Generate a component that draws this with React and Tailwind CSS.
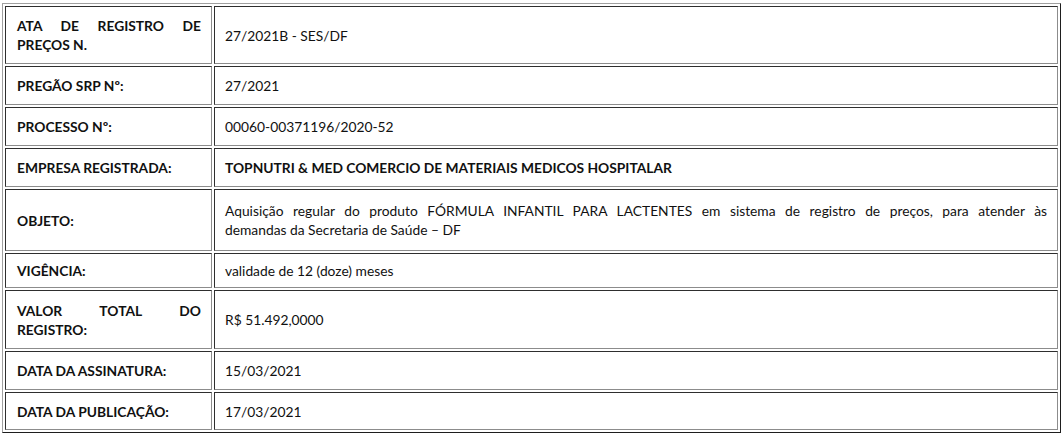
import React from 'react';

// rows of the ata table: label lines, value lines, bold value
const rows = [
  { label: ['ATA DE REGISTRO DE', 'PREÇOS N.'], value: ['27/2021B - SES/DF'] },
  { label: ['PREGÃO SRP Nº:'], value: ['27/2021'] },
  { label: ['PROCESSO Nº:'], value: ['00060-00371196/2020-52'] },
  { label: ['EMPRESA REGISTRADA:'], value: ['TOPNUTRI & MED COMERCIO DE MATERIAIS MEDICOS HOSPITALAR'], bold: true },
  {
    label: ['OBJETO:'],
    value: [
      'Aquisição regular do produto FÓRMULA INFANTIL PARA LACTENTES em sistema de registro de preços, para atender às',
      'demandas da Secretaria de Saúde – DF',
    ],
  },
  { label: ['VIGÊNCIA:'], value: ['validade de 12 (doze) meses'] },
  { label: ['VALOR TOTAL DO', 'REGISTRO:'], value: ['R$ 51.492,0000'] },
  { label: ['DATA DA ASSINATURA:'], value: ['15/03/2021'] },
  { label: ['DATA DA PUBLICAÇÃO:'], value: ['17/03/2021'] },
];

const cell =
  'flex flex-col justify-center border border-t-[#2e2e2e] border-l-[#2e2e2e] border-b-[#8c8c8c] border-r-[#8c8c8c] bg-white';

function Lines({ lines }) {
  return lines.map((line, i) => (
    <span
      key={i}
      className={i < lines.length - 1 ? 'block text-justify [text-align-last:justify]' : 'block'}
    >
      {line}
    </span>
  ));
}

function App() {
  return (
    <div className="min-h-screen w-full bg-white pl-[2px] pt-[3px] font-['Lato','Open_Sans',sans-serif] text-[13.8px] leading-[19px] text-[#111]">
      <div className="grid w-[1059px] grid-cols-[207px_844px] grid-rows-[58px_39px_39px_39px_62px_35px_59px_39px_38px] gap-[2px] border border-t-[#a0a0a0] border-l-[#a0a0a0] border-b-[#1e1e1e] border-r-[#1e1e1e] p-[2px]">
        {rows.map((r, i) => (
          <React.Fragment key={i}>
            <div className={`${cell} pl-[11px] pr-[10px] font-bold`}>
              <Lines lines={r.label} />
            </div>
            <div className={`${cell} pl-[10px] pr-[10px] ${r.bold ? 'font-bold' : ''}`}>
              <Lines lines={r.value} />
            </div>
          </React.Fragment>
        ))}
      </div>
    </div>
  );
}

export default App;
